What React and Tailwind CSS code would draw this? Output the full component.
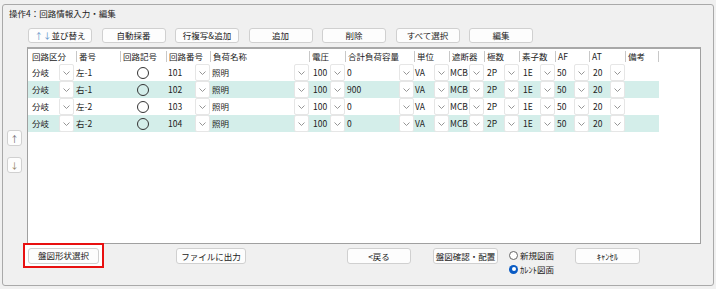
import React from 'react';

const FONT = { fontFamily: '"Noto Sans CJK JP", "Noto Sans", sans-serif' };

const topButtons = ['↑↓並び替え', '自動採番', '行複写&追加', '追加', '削除', 'すべて選択', '編集'];

// width, label, text padding, has dropdown
const columns = [
  { w: 'w-[48px]', label: '回路区分', pad: 'pl-[4px]', dd: true, sep: false },
  { w: 'w-[44px]', label: '番号', pad: 'pl-[0px]', dd: false, sep: true },
  { w: 'w-[46px]', label: '回路記号', pad: 'pl-[0px]', dd: false, sep: true, circle: true },
  { w: 'w-[44px]', label: '回路番号', pad: 'pl-[2px]', dd: true, sep: true },
  { w: 'w-[99px]', label: '負荷名称', pad: 'pl-[2px]', dd: true, sep: true },
  { w: 'w-[36px]', label: '電圧', pad: 'pl-[4px]', dd: true, sep: true },
  { w: 'w-[69px]', label: '合計負荷容量', pad: 'pl-[2px]', dd: true, sep: true },
  { w: 'w-[35px]', label: '単位', pad: 'pl-[1px]', dd: true, sep: true },
  { w: 'w-[35px]', label: '遮断器', pad: 'pl-[1px]', dd: true, sep: true },
  { w: 'w-[35px]', label: '極数', pad: 'pl-[3px]', dd: true, sep: true },
  { w: 'w-[36px]', label: '素子数', pad: 'pl-[4px]', dd: true, sep: true },
  { w: 'w-[34px]', label: 'AF', pad: 'pl-[2px]', dd: true, sep: true },
  { w: 'w-[36px]', label: 'AT', pad: 'pl-[4px]', dd: true, sep: true },
  { w: 'w-[34px]', label: '備考', pad: 'pl-[2px]', dd: false, sep: true, last: true },
];

const rows = [
  ['分岐', '左-1', '', '101', '照明', '100', '0', 'VA', 'MCB', '2P', '1E', '50', '20', ''],
  ['分岐', '右-1', '', '102', '照明', '100', '900', 'VA', 'MCB', '2P', '1E', '50', '20', ''],
  ['分岐', '左-2', '', '103', '照明', '100', '0', 'VA', 'MCB', '2P', '1E', '50', '20', ''],
  ['分岐', '右-2', '', '104', '照明', '100', '0', 'VA', 'MCB', '2P', '1E', '50', '20', ''],
];

const Btn = ({ children, className = '' }) => (
  <div className={`flex items-center justify-center bg-[#fdfdfd] border border-[#d0d0d0] rounded-[3px] text-[8.5px] text-[#1a1a1a] ${className}`}>
    {children}
  </div>
);

const Dropdown = () => (
  <div className="w-[15px] h-[17px] bg-white border border-[#e6e6e6] rounded-[2px] flex items-center justify-center shrink-0">
    <svg width="7" height="4" viewBox="0 0 7 4">
      <polyline points="0.5,0.5 3.5,3.5 6.5,0.5" fill="none" stroke="#8a8a8a" strokeWidth="0.9" />
    </svg>
  </div>
);

const App = () => {
  return (
    <div className="w-[716px] h-[289px] bg-[#f0f0f0] pt-[4px] pl-[2px]" style={FONT}>
      <div className="w-[712px] h-[282px] border border-[#a9a9a9] rounded-[3px] bg-[#f0f0f0] flex flex-col">
        {/* Title */}
        <div className="h-[23px] pl-[6px] pt-[2px] text-[8.5px] leading-[12px] text-[#1a1a1a]">
          操作4：回路情報入力・編集
        </div>

        {/* Toolbar */}
        <div className="flex h-[15px] pl-[25px] gap-[9.5px]">
          {topButtons.map((b, i) => (
            <Btn key={i} className="w-[64px] h-[15px]">
              {i === 0 ? (
                <>
                  <span className="text-[#5b8fc7]">↑↓</span>並び替え
                </>
              ) : (
                b
              )}
            </Btn>
          ))}
        </div>

        {/* Middle */}
        <div className="flex mt-[4px] h-[197px]">
          <div className="w-[24px] pl-[4px] flex flex-col">
            <Btn className="w-[15px] h-[16px] mt-[83px] text-[#666]">↑</Btn>
            <Btn className="w-[15px] h-[16px] mt-[11px] text-[#8a7a55]">↓</Btn>
          </div>
          <div className="w-[674px] h-[197px] bg-white border border-[#a0a0a0] border-t-2 border-t-[#a8a8a8]">
            {/* Header */}
            <div className="flex h-[15px] items-center text-[8.5px] text-[#222]">
              {columns.map((c, i) => (
                <div key={i} className={`${c.w} h-full flex items-center relative`}>
                  {c.sep && <div className="absolute left-0 top-[2px] w-px h-[11px] bg-[#c8c8c8]" />}
                  {c.last && <div className="absolute right-0 top-[2px] w-px h-[11px] bg-[#c8c8c8]" />}
                  <span className={i === 0 ? 'pl-[4px]' : 'pl-[3px]'}>{c.label}</span>
                </div>
              ))}
            </div>
            {/* Rows */}
            {rows.map((r, ri) => (
              <div key={ri} className={`flex w-[631px] h-[17px] text-[8.5px] text-[#222] ${ri % 2 === 1 ? 'bg-[#d4eeea]' : 'bg-white'}`}>
                {columns.map((c, ci) => (
                  <div key={ci} className={`${c.w} h-full flex items-center`}>
                    {c.circle ? (
                      <div className="w-full flex justify-center">
                        <div className="w-[12px] h-[12px] rounded-full border border-[#333]" />
                      </div>
                    ) : (
                      <>
                        <span className={`flex-1 ${c.pad} whitespace-nowrap overflow-hidden`}>{r[ci]}</span>
                        {c.dd && <Dropdown />}
                        {ci === 0 && <div className="w-[2px]" />}
                      </>
                    )}
                  </div>
                ))}
              </div>
            ))}
          </div>
        </div>

        {/* Bottom */}
        <div className="flex items-start pl-[20px]">
          <div className="w-[81px] h-[25px] mt-[-1px] border-2 border-[#e81010] bg-white flex items-center justify-center">
            <Btn className="w-[71px] h-[16px]">盤図形状選択</Btn>
          </div>
          <Btn className="w-[70px] h-[16px] mt-[4px] ml-[72px]">ファイルに出力</Btn>
          <Btn className="w-[64px] h-[16px] mt-[4px] ml-[101px]">&lt;戻る</Btn>
          <Btn className="w-[65px] h-[16px] mt-[4px] ml-[22px]">盤図確認・配置</Btn>
          <div className="w-[66px] ml-[11px] mt-[4px] flex flex-col text-[8.5px] text-[#1a1a1a]">
            <div className="h-[14px] flex items-center gap-[2px]">
              <div className="w-[9px] h-[9px] rounded-full border border-[#666] bg-white" />
              <span>新規図面</span>
            </div>
            <div className="h-[14px] flex items-center gap-[2px]">
              <div className="w-[9px] h-[9px] rounded-full bg-[#0a5bc4] flex items-center justify-center">
                <div className="w-[4px] h-[4px] rounded-full bg-white" />
              </div>
              <span>ｶﾚﾝﾄ図面</span>
            </div>
          </div>
          <Btn className="w-[65px] h-[16px] mt-[4px]">ｷｬﾝｾﾙ</Btn>
        </div>
      </div>
    </div>
  );
};

export default App;
